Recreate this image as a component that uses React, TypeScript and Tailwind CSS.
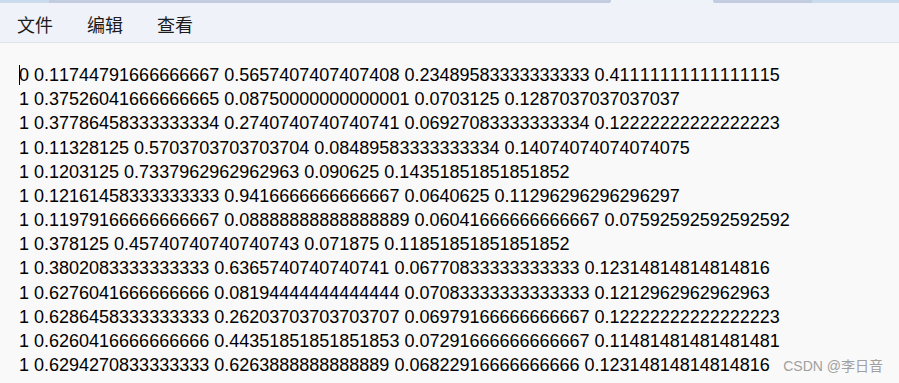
const ones = '11111' + '11111' + '11111'

const lines = [
  `0 0.11744791666666667 0.5657407407407408 0.23489583333333333 0.4${ones}5`,
  '1 0.37526041666666665 0.08750000000000001 0.0703125 0.1287037037037037',
  '1 0.37786458333333334 0.2740740740740741 0.06927083333333334 0.12222222222222223',
  '1 0.11328125 0.5703703703703704 0.08489583333333334 0.14074074074074075',
  '1 0.1203125 0.7337962962962963 0.090625 0.14351851851851852',
  '1 0.12161458333333333 0.9416666666666667 0.0640625 0.11296296296296297',
  '1 0.11979166666666667 0.08888888888888889 0.06041666666666667 0.07592592592592592',
  '1 0.378125 0.45740740740740743 0.071875 0.11851851851851852',
  '1 0.3802083333333333 0.6365740740740741 0.06770833333333333 0.12314814814814816',
  '1 0.6276041666666666 0.08194444444444444 0.07083333333333333 0.1212962962962963',
  '1 0.6286458333333333 0.26203703703703707 0.06979166666666667 0.12222222222222223',
  '1 0.6260416666666666 0.44351851851851853 0.07291666666666667 0.11481481481481481',
  '1 0.6294270833333333 0.6263888888888889 0.06822916666666666 0.12314814814814816',
]

const menus = ['文件', '编辑', '查看']

export default function App() {
  return (
    <div className="w-[899px] h-[383px] overflow-hidden bg-[#f9f9f9] flex flex-col">
      {/* tab strip */}
      <div className="flex h-[3px] shrink-0 bg-[#eef3f9]">
        <div className="w-[49px] bg-[#cadbee]" />
        <div className="w-[562px] bg-[#c3cde0] rounded-br-[2px]" />
        <div className="w-[102px]" />
        <div className="w-[99px] bg-[#c3cde0] rounded-bl-[2px]" />
        <div className="flex-1 bg-[#cadbee]" />
      </div>

      {/* menu bar */}
      <div
        className="h-[40px] shrink-0 bg-[#eff3f9] border-b border-[#dfe4ea] flex items-center pl-[17px] pt-[2px] gap-[34px] text-[18px] text-[#1b1b1b]"
        style={{ fontFamily: '"Noto Sans CJK SC", sans-serif' }}
      >
        {menus.map((m) => (
          <span key={m} className="leading-none">{m}</span>
        ))}
      </div>

      {/* editor */}
      <div className="relative flex-1 pt-[20px] pl-[19px]">
        <div
          className="text-[18px] leading-[24.17px] text-black whitespace-pre [font-kerning:none]"
          style={{ fontFamily: '"Liberation Sans", Arial, sans-serif' }}
        >
          {lines.map((l, i) => (
            <div key={i} className="relative">
              {i === 0 && <span className="absolute left-0 top-[2px] w-px h-[20px] bg-black" />}
              {l}
            </div>
          ))}
        </div>
        <div
          className="absolute right-[16px] bottom-[6px] text-[14px] text-[#a0a0a0]"
          style={{ fontFamily: '"Liberation Sans", "Noto Sans CJK SC", sans-serif' }}
        >
          CSDN @李日音
        </div>
      </div>
    </div>
  )
}
